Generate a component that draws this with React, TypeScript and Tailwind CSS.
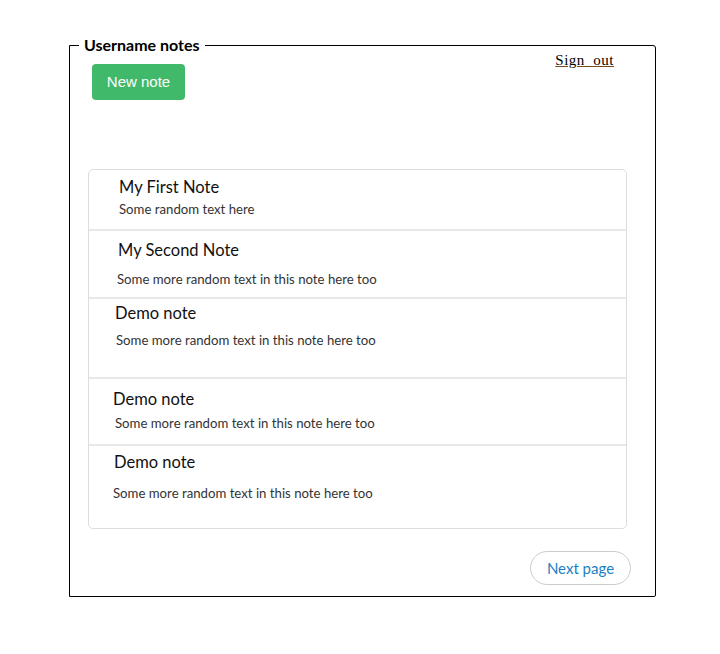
import React from "react"

interface Note {
  id: number
  title: string
  body: string
  className: string
  titleClass: string
  bodyClass: string
}

const notes: Note[] = [
  { id: 1, title: "My First Note", body: "Some random text here", className: "h-[61px] pt-[6px]", titleClass: "pl-[30px]", bodyClass: "pl-[30px] mt-[2px]" },
  { id: 2, title: "My Second Note", body: "Some more random text in this note here too", className: "h-[68px] pt-[8px]", titleClass: "pl-[29px]", bodyClass: "pl-[28px] mt-[9px]" },
  { id: 3, title: "Demo note", body: "Some more random text in this note here too", className: "h-[80px] pt-[3px]", titleClass: "pl-[26px]", bodyClass: "pl-[27px] mt-[7px]" },
  { id: 4, title: "Demo note", body: "Some more random text in this note here too", className: "h-[67px] pt-[9px]", titleClass: "pl-[24px]", bodyClass: "pl-[26px] mt-[4px]" },
  { id: 5, title: "Demo note", body: "Some more random text in this note here too", className: "h-[82px] pt-[5px]", titleClass: "pl-[25px]", bodyClass: "pl-[24px] mt-[11px]" },
]

export default function App() {
  return (
    <div className="min-h-[654px] w-[720px] bg-white pt-[36px] pl-[69px] font-['Lato',sans-serif]">
      <fieldset className="w-[587px] h-[561px] border border-black rounded-tr-[3px] rounded-br-[2px] px-[18px] pt-[9px]">
        <legend className="-ml-[9px] px-[5px] text-[16px] font-bold leading-[18px] text-black">
          Username notes
        </legend>

        <div className="flex items-start justify-between">
          <button className="mt-[1px] ml-[4px] h-[36px] w-[93px] rounded-[4px] bg-[#41b96b] pt-[1px] text-[15px] text-white font-['Liberation_Sans',Arial,sans-serif]">
            New note
          </button>
          <a
            href="#"
            className="mr-[23px] -mt-[14px] text-[15px] tracking-[0.5px] text-black underline decoration-[#7a4a1a] font-['Liberation_Serif',serif]"
          >
            Sign&nbsp;&nbsp;out
          </a>
        </div>

        <div className="mt-[69px] w-[539px] rounded-[5px] border border-[#dddddd]">
          {notes.map((note, i) => (
            <div
              key={note.id}
              className={`${note.className} ${i < notes.length - 1 ? "border-b-2 border-[#e8e8e8]" : ""}`}
            >
              <div className={`${note.titleClass} text-[16.5px] leading-[22px] text-[#111]`}>{note.title}</div>
              <div className={`${note.bodyClass} text-[13.2px] leading-[18px] text-[#333]`}>{note.body}</div>
            </div>
          ))}
        </div>

        <div className="mt-[22px] flex justify-end">
          <button className="mr-[6px] h-[34px] w-[101px] rounded-[17px] border border-[#cccccc] text-[15px] text-[#1a7fc4]">
            Next page
          </button>
        </div>
      </fieldset>
    </div>
  )
}
